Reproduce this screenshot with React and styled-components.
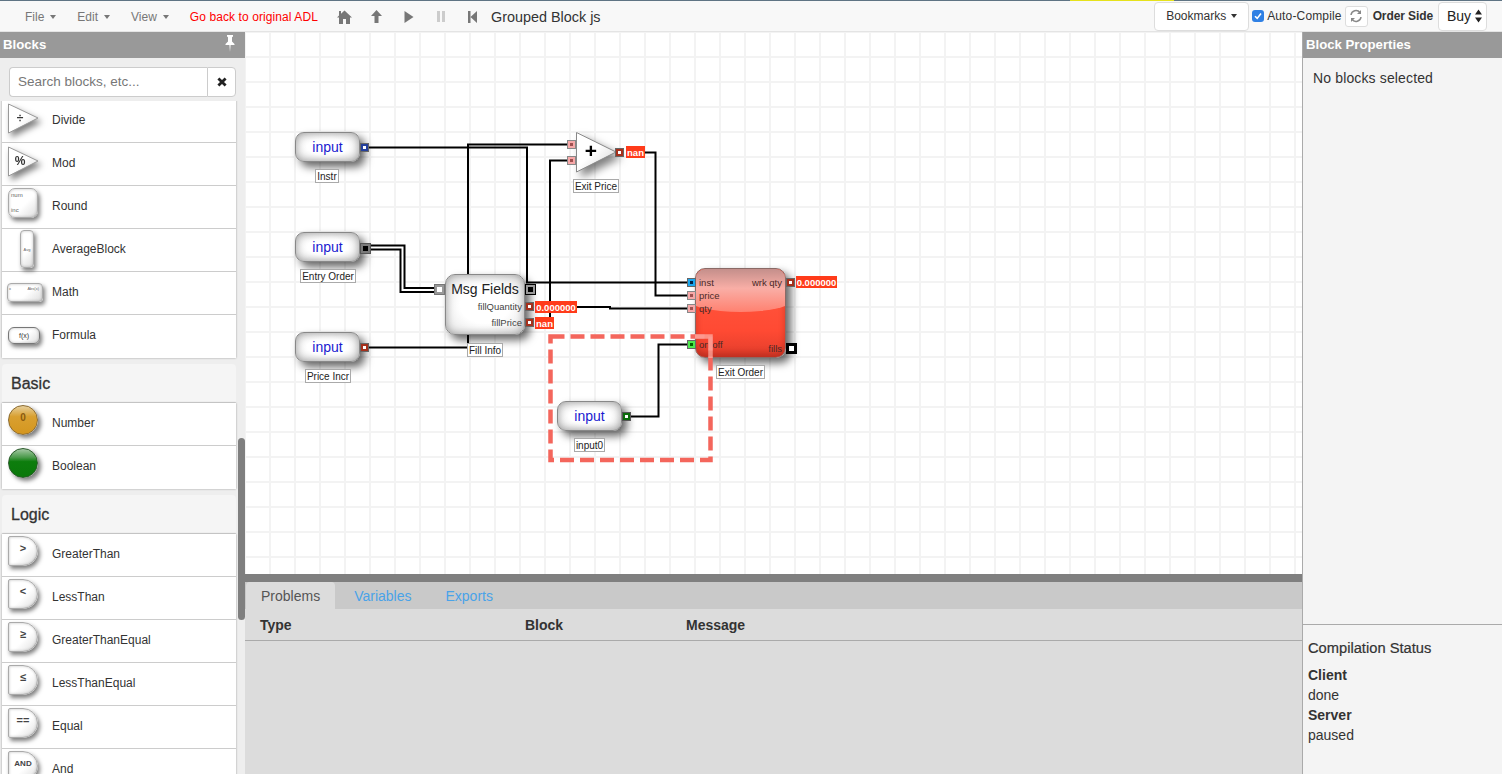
import React from 'react';
import styled, { createGlobalStyle } from 'styled-components';

const GlobalStyle = createGlobalStyle`
html, body {
    margin: 0;
    padding: 0;
    overflow: hidden;
}
body {
    font-family: 'Liberation Sans', Arial, sans-serif;
    font-size: 14px;
    color: #333;
}
* {
    box-sizing: border-box;
}
`

const CANVAS_X = 245;
const CANVAS_Y = 32;

const logicBlocks = [
    { name: 'GreaterThan', symbol: '>' },
    { name: 'LessThan', symbol: '<' },
    { name: 'GreaterThanEqual', symbol: '≥' },
    { name: 'LessThanEqual', symbol: '≤' },
    { name: 'Equal', symbol: '==' },
    { name: 'And', symbol: 'AND', small: true },
];

const inputs = [
    { x: 295, y: 132, label: 'Instr', labelX: 315, labelY: 169, labelW: 24, port: 'blue' },
    { x: 295, y: 232, label: 'Entry Order', labelX: 300, labelY: 269, labelW: 56, port: 'gray' },
    { x: 295, y: 332, label: 'Price Incr', labelX: 305, labelY: 369, labelW: 46, port: 'brick' },
    { x: 557, y: 401, label: 'input0', labelX: 574, labelY: 438, labelW: 31, port: 'green' },
];

const portColors = {
    blue: { ring: '#666', fill: '#243f9c', dot: '#fff' },
    gray: { ring: '#555', fill: '#7a7a7a', dot: '#000', big: true },
    brick: { ring: '#666', fill: '#a5301c', dot: '#fff' },
    green: { ring: '#555', fill: '#0b6b0b', dot: '#fff' },
    pink: { ring: '#888', fill: '#f7a8a8', dot: '#a05050' },
    sky: { ring: '#666', fill: '#1aa7f0', dot: '#024' },
    lime: { ring: '#666', fill: '#4de84d', dot: '#060' },
    hollow: { ring: '#777', fill: '#999', dot: '#fff', big: true },
    sink: { ring: '#000', fill: '#999', dot: '#000', big: true },
    fills: { ring: '#000', fill: '#000', dot: '#fff', big: true },
};

const ports = [
    { x: 434, y: 284, size: 11, kind: 'hollow' },
    { x: 525, y: 284, size: 11, kind: 'sink' },
    { x: 525, y: 302, size: 9, kind: 'brick' },
    { x: 525, y: 318, size: 9, kind: 'brick' },
    { x: 567, y: 140, size: 9, kind: 'pink' },
    { x: 567, y: 156, size: 9, kind: 'pink' },
    { x: 615, y: 148, size: 9, kind: 'brick' },
    { x: 687, y: 278, size: 9, kind: 'sky' },
    { x: 687, y: 291, size: 9, kind: 'pink' },
    { x: 687, y: 304, size: 9, kind: 'pink' },
    { x: 687, y: 340, size: 9, kind: 'lime' },
    { x: 786, y: 278, size: 9, kind: 'brick' },
    { x: 786, y: 343, size: 11, kind: 'fills' },
];

const badges = [
    { x: 535, y: 301, w: 42, text: '0.000000' },
    { x: 535, y: 317, w: 19, text: 'nan' },
    { x: 626, y: 146, w: 19, text: 'nan' },
    { x: 796, y: 276, w: 41, text: '0.000000' },
];

const wires = [
    'M369 147.5H527V282.5H688',
    'M369 347.5H468V144.5H568',
    'M550 318V160.5H568',
    'M645 152.5H655.5V295.5H688',
    'M577 307H610V308.5H688',
    'M631 416.5H658.5V344.5H688',
];

function CanvasPort({ x, y, size, kind }) {
    const color = portColors[kind];
    return (
        <Port $x={x} $y={y} $size={size} $ring={color.ring} $fill={color.fill}>
            <PortDot $dot={color.dot} $big={color.big} />
        </Port>
    )
}

function InputBlock({ x, y, label, labelX, labelY, labelW, port }) {
    return (
        <>
            <WhiteBlock $x={x} $y={y} $w={65} $h={30} $radius={9}>
                <InputText>input</InputText>
            </WhiteBlock>
            <CanvasPort x={x + 65} y={y + 11} size={port === 'gray' ? 11 : 9} kind={port} />
            <BlockLabel $x={labelX} $y={labelY} $w={labelW}>{label}</BlockLabel>
        </>
    )
}

function Triangle({ children }) {
    return (
        <TriangleIcon>
            <svg width="31" height="31" viewBox="0 0 31 31">
                <defs>
                    <linearGradient id="triFill" x1="0" y1="0" x2="1" y2="1">
                        <stop offset="0.5" stopColor="#ffffff" />
                        <stop offset="1" stopColor="#d8d8d8" />
                    </linearGradient>
                </defs>
                <path d="M0.5 1L30 15L0.5 30Z" fill="url(#triFill)" stroke="#999" />
            </svg>
            <TriangleSymbol>{children}</TriangleSymbol>
        </TriangleIcon>
    )
}

function MenuItem({ children }) {
    return (
        <Menu>
            {children}
            <Caret />
        </Menu>
    )
}

export default function App() {
    return (
        <Page>
            <GlobalStyle />
            <TopBar>
                <YellowStrip />
                <MenuItem>File</MenuItem>
                <MenuItem>Edit</MenuItem>
                <MenuItem>View</MenuItem>
                <BackLink>Go back to original ADL</BackLink>
                <IconGroup>
                    <ToolIcon>
                        <svg width="15" height="14" viewBox="0 0 15 14"><path d="M7.5 0.5L15 7.5H13V14H9V9H6V14H2V7.5H0L2 5.6V1H4V3.8Z" fill="#777" /></svg>
                    </ToolIcon>
                    <ToolIcon>
                        <svg width="11" height="13" viewBox="0 0 11 13"><path d="M5.5 0L11 6H7.5V13H3.5V6H0Z" fill="#777" /></svg>
                    </ToolIcon>
                    <ToolIcon>
                        <svg width="10" height="12" viewBox="0 0 10 12"><path d="M0.5 0L9.5 6L0.5 12Z" fill="#777" /></svg>
                    </ToolIcon>
                    <ToolIcon>
                        <svg width="8" height="11" viewBox="0 0 8 11"><path d="M0 0H3V11H0ZM5 0H8V11H5Z" fill="#ccc" /></svg>
                    </ToolIcon>
                    <ToolIcon>
                        <svg width="9" height="12" viewBox="0 0 9 12"><path d="M0 0H2.5V12H0ZM9 0V12L2.5 6Z" fill="#777" /></svg>
                    </ToolIcon>
                </IconGroup>
                <Title>Grouped Block js</Title>
                <RightTools>
                    <BookmarksButton>Bookmarks<DarkCaret /></BookmarksButton>
                    <CheckBox>
                        <svg width="10" height="10" viewBox="0 0 10 10"><path d="M2 5.2L4.2 7.4L8 2.6" fill="none" stroke="#fff" strokeWidth="1.6" /></svg>
                    </CheckBox>
                    <CheckLabel>Auto-Compile</CheckLabel>
                    <RefreshButton>
                        <svg width="14" height="14" viewBox="0 0 14 14" fill="none" stroke="#888" strokeWidth="1.5">
                            <path d="M2 6A5 5 0 0 1 11 3.6" />
                            <path d="M12 8A5 5 0 0 1 3 10.4" />
                            <path d="M12 1V5H8" fill="#888" stroke="none" />
                            <path d="M2 13V9H6" fill="#888" stroke="none" />
                        </svg>
                    </RefreshButton>
                    <OrderSide>Order Side</OrderSide>
                    <SideSelect>
                        Buy
                        <svg width="7" height="14" viewBox="0 0 7 14"><path d="M3.5 0.5L7 5.5H0ZM3.5 13.5L0 8.5H7Z" fill="#222" /></svg>
                    </SideSelect>
                </RightTools>
            </TopBar>
            <Main>
                <Sidebar>
                    <PanelHeader>
                        Blocks
                        <PinIcon>
                            <svg width="10" height="17" viewBox="0 0 10 17"><path d="M2 0H8V1.5L7 2.2V6.5L9.5 9V10H5.6L5 17L4.4 10H0.5V9L3 6.5V2.2L2 1.5Z" fill="#fff" /></svg>
                        </PinIcon>
                    </PanelHeader>
                    <SearchRow>
                        <SearchInput>Search blocks, etc...</SearchInput>
                        <SearchClear>
                            <svg width="10" height="10" viewBox="0 0 10 10"><path d="M1.4 1.4L8.6 8.6M8.6 1.4L1.4 8.6" stroke="#222" strokeWidth="2.8" /></svg>
                        </SearchClear>
                    </SearchRow>
                    <BlockList>
                        <BlockScroll>
                            <BlockCard>
                                <BlockRow><IconSlot><Triangle>÷</Triangle></IconSlot><BlockName>Divide</BlockName></BlockRow>
                                <BlockRow><IconSlot><Triangle>%</Triangle></IconSlot><BlockName>Mod</BlockName></BlockRow>
                                <BlockRow>
                                    <IconSlot>
                                        <RoundIcon><TinyTop>num</TinyTop><TinyBottom>inc</TinyBottom></RoundIcon>
                                    </IconSlot>
                                    <BlockName>Round</BlockName>
                                </BlockRow>
                                <BlockRow>
                                    <IconSlot><AverageIcon>Avg</AverageIcon></IconSlot>
                                    <BlockName>AverageBlock</BlockName>
                                </BlockRow>
                                <BlockRow>
                                    <IconSlot><MathIcon><span>x</span><span>Abs(x)</span></MathIcon></IconSlot>
                                    <BlockName>Math</BlockName>
                                </BlockRow>
                                <BlockRow>
                                    <IconSlot><FormulaIcon>f(x)</FormulaIcon></IconSlot>
                                    <BlockName>Formula</BlockName>
                                </BlockRow>
                            </BlockCard>
                            <SectionTitle>Basic</SectionTitle>
                            <BlockCard>
                                <BlockRow>
                                    <IconSlot><NumberIcon>0</NumberIcon></IconSlot>
                                    <BlockName>Number</BlockName>
                                </BlockRow>
                                <BlockRow>
                                    <IconSlot><BooleanIcon /></IconSlot>
                                    <BlockName>Boolean</BlockName>
                                </BlockRow>
                            </BlockCard>
                            <SectionTitle>Logic</SectionTitle>
                            <BlockCard>
                                {logicBlocks.map(block => (
                                    <BlockRow key={block.name}>
                                        <IconSlot><LogicIcon $small={block.small}>{block.symbol}</LogicIcon></IconSlot>
                                        <BlockName>{block.name}</BlockName>
                                    </BlockRow>
                                ))}
                            </BlockCard>
                        </BlockScroll>
                        <ScrollThumb />
                    </BlockList>
                </Sidebar>
                <Center>
                    <Canvas>
                        <Wires viewBox={`${CANVAS_X} ${CANVAS_Y} 1057 542`}>
                            <path d="M369 247.5H402.5V290H434" fill="none" stroke="#000" strokeWidth="6" />
                            <path d="M369 247.5H402.5V290H434" fill="none" stroke="#fff" strokeWidth="2" />
                            {wires.map(d => (
                                <path key={d} d={d} fill="none" stroke="#000" strokeWidth="2" />
                            ))}
                        </Wires>

                        {inputs.map(input => <InputBlock key={input.label} {...input} />)}

                        <WhiteBlock $x={445} $y={274} $w={80} $h={61} $radius={10}>
                            <MsgTitle>Msg Fields</MsgTitle>
                            <MsgField $y={26}>fillQuantity</MsgField>
                            <MsgField $y={42}>fillPrice</MsgField>
                        </WhiteBlock>
                        <BlockLabel $x={467} $y={343} $w={36}>Fill Info</BlockLabel>

                        <AdderShape $x={576} $y={132}>
                            <svg width="41" height="41" viewBox="0 0 41 41">
                                <defs>
                                    <linearGradient id="adderFill" x1="0" y1="0" x2="1" y2="1">
                                        <stop offset="0.45" stopColor="#ffffff" />
                                        <stop offset="1" stopColor="#cfcfcf" />
                                    </linearGradient>
                                </defs>
                                <path d="M0.5 0.5L40 20L0.5 40Z" fill="url(#adderFill)" stroke="#888" />
                            </svg>
                            <AdderSign>+</AdderSign>
                        </AdderShape>
                        <BlockLabel $x={573} $y={179} $w={46}>Exit Price</BlockLabel>

                        <ExitBlock $x={695} $y={268}>
                            <ExitText $left={3} $y={8}>inst</ExitText>
                            <ExitText $left={3} $y={21}>price</ExitText>
                            <ExitText $left={3} $y={34}>qty</ExitText>
                            <ExitText $left={3} $y={70}>on/off</ExitText>
                            <ExitText $right={3} $y={8}>wrk qty</ExitText>
                            <ExitText $right={3} $y={74}>fills</ExitText>
                        </ExitBlock>
                        <BlockLabel $x={716} $y={365} $w={49}>Exit Order</BlockLabel>

                        {ports.map(port => <CanvasPort key={`${port.x}-${port.y}`} {...port} />)}
                        {badges.map(badge => (
                            <ValueBadge key={badge.x} $x={badge.x} $y={badge.y} $w={badge.w}>{badge.text}</ValueBadge>
                        ))}

                        <SelectionBox viewBox={`${CANVAS_X} ${CANVAS_Y} 1057 542`}>
                            <rect x="550.5" y="336.5" width="160" height="123.5" fill="none" stroke="#f4665c" strokeWidth="4.5" strokeDasharray="14 6" />
                            <path d="M695 336.5H710.5V358" fill="none" stroke="#ffb0a6" strokeOpacity="0.7" strokeWidth="4.5" />
                        </SelectionBox>
                    </Canvas>
                    <BottomPanel>
                        <Tabs>
                            <Tab $active>Problems</Tab>
                            <Tab $left={19}>Variables</Tab>
                            <Tab $left={34}>Exports</Tab>
                        </Tabs>
                        <TableHead>
                            <TypeColumn>Type</TypeColumn>
                            <BlockColumn>Block</BlockColumn>
                            <span>Message</span>
                        </TableHead>
                    </BottomPanel>
                </Center>
                <RightPanel>
                    <PanelHeader>Block Properties</PanelHeader>
                    <Properties>No blocks selected</Properties>
                    <Status>
                        <StatusTitle>Compilation Status</StatusTitle>
                        <strong>Client</strong>
                        <span>done</span>
                        <strong>Server</strong>
                        <span>paused</span>
                    </Status>
                </RightPanel>
            </Main>
        </Page>
    )
}

const Page = styled.div`
width: 1502px;
height: 774px;
display: flex;
flex-direction: column;
overflow: hidden;
`
const TopBar = styled.div`
position: relative;
flex: 0 0 32px;
display: flex;
align-items: center;
padding: 1px 15px 0 25px;
background: #f8f8f8;
border-top: 1px solid #5f7484;
border-bottom: 1px solid #e4e4e4;
font-size: 12px;
`
const YellowStrip = styled.div`
position: absolute;
top: -1px;
left: 1070px;
width: 104px;
height: 1px;
background: #e6e21c;
`
const Menu = styled.div`
display: flex;
align-items: center;
color: #777;
margin-right: 21px;
`
const Caret = styled.span`
margin-left: 6px;
border-top: 4px solid #777;
border-left: 3.5px solid transparent;
border-right: 3.5px solid transparent;
`
const DarkCaret = styled(Caret)`
border-top-color: #333;
margin-left: 5px;
`
const BackLink = styled.div`
color: #f00;
letter-spacing: 0.09px;
`
const IconGroup = styled.div`
display: flex;
margin-left: 11px;
`
const ToolIcon = styled.div`
width: 32px;
display: flex;
justify-content: center;
align-items: center;
`
const Title = styled.div`
margin-left: 2px;
font-size: 14.4px;
color: #333;
`
const RightTools = styled.div`
margin: -1px 0 0 auto;
display: flex;
align-items: center;
`
const BookmarksButton = styled.div`
width: 95px;
height: 29px;
display: flex;
align-items: center;
justify-content: center;
background: #fff;
border: 1px solid #ddd;
border-radius: 4px;
`
const CheckBox = styled.div`
width: 12px;
height: 12px;
margin-left: 3px;
display: flex;
align-items: center;
justify-content: center;
background: #2f80e4;
border-radius: 3px;
`
const CheckLabel = styled.div`
margin-left: 3px;
letter-spacing: 0.15px;
`
const RefreshButton = styled.div`
width: 23px;
height: 21px;
margin-left: 3px;
display: flex;
align-items: center;
justify-content: center;
background: #fff;
border: 1px solid #ddd;
border-radius: 3px;
`
const OrderSide = styled.div`
margin-left: 5px;
font-weight: 700;
letter-spacing: -0.1px;
`
const SideSelect = styled.div`
width: 49px;
height: 29px;
margin-left: 5px;
padding: 0 4px 0 8px;
display: flex;
align-items: center;
justify-content: space-between;
background: #fff;
border: 1px solid #ddd;
border-radius: 4px;
font-size: 14px;
color: #222;
`
const Main = styled.div`
flex: 1;
min-height: 0;
display: flex;
`
const Sidebar = styled.div`
flex: 0 0 245px;
display: flex;
flex-direction: column;
background: #eee;
`
const PanelHeader = styled.div`
position: relative;
flex: 0 0 26px;
display: flex;
align-items: center;
padding: 0 0 1px 3px;
background: #999;
color: #fff;
font-weight: 700;
font-size: 13.2px;
`
const PinIcon = styled.span`
position: absolute;
top: 3px;
right: 10px;
`
const SearchRow = styled.div`
flex: 0 0 43px;
display: flex;
padding: 9px 9px 4px 9px;
`
const SearchInput = styled.div`
flex: 1;
display: flex;
align-items: center;
padding: 0 0 2px 8px;
background: #fff;
border: 1px solid #ccc;
border-right: none;
border-radius: 4px 0 0 4px;
color: #777;
font-size: 13.5px;
`
const SearchClear = styled.div`
width: 29px;
display: flex;
align-items: center;
justify-content: center;
background: #fff;
border: 1px solid #ccc;
border-radius: 0 4px 4px 0;
`
const BlockList = styled.div`
position: relative;
flex: 1;
min-height: 0;
overflow: hidden;
`
const BlockScroll = styled.div`
width: 234px;
margin: -1px 0 0 2px;
`
const ScrollThumb = styled.div`
position: absolute;
left: 238px;
top: 337px;
width: 7px;
height: 182px;
background: #7f7f7f;
border-radius: 4px;
`
const BlockCard = styled.div`
background: #fff;
box-shadow: 0 0 2px rgba(0, 0, 0, 0.35);
`
const BlockRow = styled.div`
height: 43px;
display: flex;
align-items: center;
border-bottom: 1px solid #ccc;
&:last-child {
    border-bottom: none;
}
`
const IconSlot = styled.div`
position: relative;
flex: 0 0 50px;
align-self: stretch;
`
const BlockName = styled.div`
padding-bottom: 3px;
font-size: 12px;
color: #333;
`
const SectionTitle = styled.div`
height: 39px;
margin-top: 6px;
display: flex;
align-items: center;
padding: 2px 0 0 9px;
background: #f5f5f5;
border-radius: 4px 4px 0 0;
border-bottom: 1px solid #ddd;
font-size: 16px;
font-weight: 500;
color: #333;
-webkit-text-stroke: 0.3px #333;
`
const TriangleIcon = styled.div`
position: absolute;
left: 6px;
top: 3px;
width: 31px;
height: 31px;
filter: drop-shadow(3px 4px 3px rgba(0, 0, 0, 0.5));
`
const TriangleSymbol = styled.div`
position: absolute;
left: 2px;
top: 8px;
width: 20px;
text-align: center;
font-size: 12px;
font-weight: 700;
line-height: 14px;
color: #333;
`
const SoftIcon = styled.div`
position: absolute;
background: linear-gradient(135deg, #fff 55%, #ddd);
border: 1px solid #aaa;
box-shadow: 2px 3px 4px rgba(0, 0, 0, 0.5), inset 0 0 3px rgba(0, 0, 0, 0.25);
color: #666;
`
const RoundIcon = styled(SoftIcon)`
left: 6px;
top: 2px;
width: 30px;
height: 30px;
border-radius: 7px;
`
const TinyTop = styled.span`
position: absolute;
left: 2px;
top: 3px;
font-size: 6px;
`
const TinyBottom = styled.span`
position: absolute;
left: 2px;
bottom: 4px;
font-size: 6px;
`
const AverageIcon = styled(SoftIcon)`
left: 18px;
top: 1px;
width: 14px;
height: 38px;
border-radius: 4px;
display: flex;
align-items: center;
justify-content: center;
font-size: 4px;
`
const MathIcon = styled(SoftIcon)`
left: 5px;
top: 11px;
width: 36px;
height: 19px;
border-radius: 4px;
display: flex;
justify-content: space-between;
padding: 2px 3px 0 1px;
font-size: 4px;
`
const FormulaIcon = styled(SoftIcon)`
left: 6px;
top: 12px;
width: 32px;
height: 17px;
border-radius: 6px;
border-color: #777;
display: flex;
align-items: center;
justify-content: center;
font-size: 7px;
color: #333;
`
const NumberIcon = styled.div`
position: absolute;
left: 6px;
top: 2px;
width: 30px;
height: 30px;
display: flex;
align-items: flex-start;
justify-content: center;
padding-top: 7px;
border-radius: 50%;
border: 1px solid #8a6a30;
background: linear-gradient(#e6cf9c, #d9a030 38%, #d4961f);
box-shadow: 3px 3px 4px rgba(0, 0, 0, 0.5);
font-size: 10px;
font-weight: 700;
line-height: 10px;
color: #8a5a10;
`
const BooleanIcon = styled(NumberIcon)`
border-color: #2a5a2a;
background: linear-gradient(#a4c8a4, #4b9a4b 30%, #0d7d0d 45%, #0a780a);
`
const LogicIcon = styled(SoftIcon)`
left: 6px;
top: 2px;
width: 30px;
height: 30px;
padding-top: 6px;
text-align: center;
border-radius: 2px 15px 15px 2px;
font-size: ${props => props.$small ? '8px' : '11px'};
font-weight: 700;
line-height: 11px;
color: #444;
`
const Center = styled.div`
flex: 1;
min-width: 0;
display: flex;
flex-direction: column;
`
const Canvas = styled.div`
position: relative;
flex: 0 0 542px;
overflow: hidden;
background-color: #fff;
background-image:
    linear-gradient(to right, #f3f3f3 2px, transparent 2px),
    linear-gradient(to bottom, #f3f3f3 2px, transparent 2px);
background-size: 25px 25px;
background-position: -1px -1px;
`
const Wires = styled.svg`
position: absolute;
left: 0;
top: 0;
width: 1057px;
height: 542px;
`
const SelectionBox = styled(Wires)`
pointer-events: none;
`
const WhiteBlock = styled.div`
position: absolute;
left: ${props => props.$x - CANVAS_X}px;
top: ${props => props.$y - CANVAS_Y}px;
width: ${props => props.$w}px;
height: ${props => props.$h}px;
display: flex;
align-items: center;
justify-content: center;
background: radial-gradient(ellipse at center, #fff 45%, #e2e2e2 100%);
border: 1px solid #888;
border-radius: ${props => props.$radius}px;
box-shadow: 5px 5px 8px rgba(0, 0, 0, 0.6), inset 0 0 8px rgba(0, 0, 0, 0.35);
`
const InputText = styled.div`
font-size: 14px;
color: #1a1ad0;
`
const MsgTitle = styled.div`
position: absolute;
top: 6px;
left: 0;
right: 0;
text-align: center;
font-size: 14px;
color: #222;
`
const MsgField = styled.div`
position: absolute;
top: ${props => props.$y}px;
right: 2px;
font-size: 9.5px;
color: #444;
`
const BlockLabel = styled.div`
position: absolute;
left: ${props => props.$x - CANVAS_X}px;
top: ${props => props.$y - CANVAS_Y}px;
width: ${props => props.$w}px;
height: 14px;
display: flex;
align-items: center;
justify-content: center;
background: #fff;
border: 1px solid #aaa;
font-size: 10px;
white-space: nowrap;
color: #222;
`
const Port = styled.div`
position: absolute;
left: ${props => props.$x - CANVAS_X}px;
top: ${props => props.$y - CANVAS_Y}px;
width: ${props => props.$size}px;
height: ${props => props.$size}px;
display: flex;
align-items: center;
justify-content: center;
background: ${props => props.$fill};
border: 1px solid ${props => props.$ring};
`
const PortDot = styled.span`
width: ${props => props.$big ? '5px' : '3px'};
height: ${props => props.$big ? '5px' : '3px'};
background: ${props => props.$dot};
`
const ValueBadge = styled.div`
position: absolute;
left: ${props => props.$x - CANVAS_X}px;
top: ${props => props.$y - CANVAS_Y}px;
width: ${props => props.$w}px;
height: 12px;
display: flex;
align-items: center;
justify-content: center;
background: #ff3b1a;
color: #fff;
font-size: 9.5px;
font-weight: 700;
`
const AdderShape = styled.div`
position: absolute;
left: ${props => props.$x - CANVAS_X}px;
top: ${props => props.$y - CANVAS_Y}px;
width: 41px;
height: 41px;
filter: drop-shadow(5px 5px 4px rgba(0, 0, 0, 0.5));
`
const AdderSign = styled.div`
position: absolute;
left: 5px;
top: 7px;
width: 20px;
text-align: center;
font-size: 21px;
font-weight: 700;
line-height: 24px;
color: #000;
`
const ExitBlock = styled.div`
position: absolute;
left: ${props => props.$x - CANVAS_X}px;
top: ${props => props.$y - CANVAS_Y}px;
width: 91px;
height: 90px;
overflow: hidden;
border: 1px solid #8a6a66;
border-radius: 10px;
background: linear-gradient(#ff5a42, #ff4a33 70%, #e23d2c);
box-shadow: 5px 5px 9px rgba(0, 0, 0, 0.6), inset 0 -4px 6px rgba(120, 20, 10, 0.35);

&::before {
    content: '';
    position: absolute;
    left: -8px;
    right: -8px;
    top: 0;
    height: 43px;
    border-radius: 0 0 50% 50% / 0 0 30% 30%;
    background: linear-gradient(#c48f8b, #f9aea6 45%, #ff8170);
}
`
const ExitText = styled.div`
position: absolute;
top: ${props => props.$y}px;
${props => props.$right ? `right: ${props.$right}px;` : `left: ${props.$left}px;`}
font-size: 9.5px;
line-height: 11px;
color: #4a2a28;
`
const BottomPanel = styled.div`
flex: 1;
min-height: 0;
background: #dcdcdc;
border-top: 8px solid #7f7f7f;
`
const Tabs = styled.div`
height: 27px;
display: flex;
background: #c9c9c9;
padding-left: 1px;
`
const Tab = styled.div`
display: flex;
align-items: center;
margin-left: ${props => props.$left || 0}px;
padding: 0 ${props => props.$active ? '15px' : '0'};
background: ${props => props.$active ? '#dcdcdc' : 'transparent'};
border-radius: 4px 4px 0 0;
color: ${props => props.$active ? '#555' : '#4aa3e8'};
`
const TableHead = styled.div`
height: 32px;
display: flex;
align-items: center;
padding-left: 15px;
border-bottom: 1px solid #aaa;
font-weight: 700;
color: #333;
`
const TypeColumn = styled.span`
width: 265px;
`
const BlockColumn = styled.span`
width: 161px;
`
const RightPanel = styled.div`
flex: 0 0 200px;
display: flex;
flex-direction: column;
background: #f4f4f4;
border-left: 1px solid #aaa;
`
const Properties = styled.div`
flex: 1;
padding: 12px 0 0 10px;
letter-spacing: 0.14px;
color: #333;
`
const Status = styled.div`
flex: 0 0 150px;
display: flex;
flex-direction: column;
padding: 13px 0 0 5px;
border-top: 1px solid #aaa;
line-height: 20px;
color: #333;
`
const StatusTitle = styled.div`
margin-bottom: 7px;
font-size: 14.7px;
-webkit-text-stroke: 0.2px #333;
`
